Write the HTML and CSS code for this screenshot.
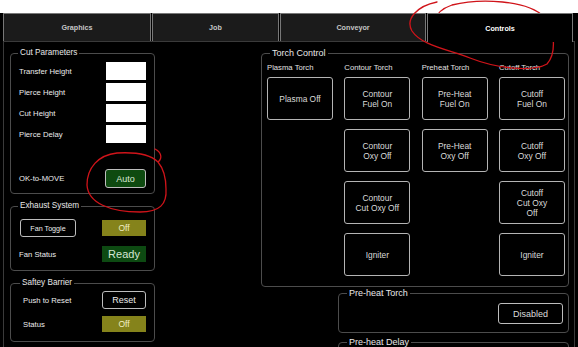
FILE: index.html
```html
<!DOCTYPE html>
<html lang="en">
<head>
  <meta charset="UTF-8" />
  <title>Controls</title>
  <link rel="stylesheet" href="styles.css">
</head>
<body>
  <div class="screen">
    <div class="top-strip"></div>

    <!-- tab bar -->
    <nav class="tabs">
      <div class="tab tab-graphics">Graphics</div>
      <div class="tab tab-job">Job</div>
      <div class="tab tab-conveyor">Conveyor</div>
      <div class="tab tab-controls active">Controls</div>
    </nav>

    <main class="content">
      <!-- left column -->
      <div class="left-col">
        <fieldset class="group cut">
          <legend>Cut Parameters</legend>
          <div class="param-list">
            <div class="row"><span>Transfer Height</span><input class="field" type="text"></div>
            <div class="row"><span>Pierce Height</span><input class="field" type="text"></div>
            <div class="row"><span>Cut Height</span><input class="field" type="text"></div>
            <div class="row"><span>Pierce Delay</span><input class="field" type="text"></div>
          </div>
          <div class="row ok-row"><span>OK-to-MOVE</span><button class="btn btn-auto">Auto</button></div>
        </fieldset>

        <fieldset class="group exhaust">
          <legend>Exhaust System</legend>
          <div class="row"><button class="btn btn-fan">Fan Toggle</button><div class="lamp lamp-off">Off</div></div>
          <div class="row gap-row"><span>Fan Status</span><div class="lamp lamp-ready">Ready</div></div>
        </fieldset>

        <fieldset class="group safety">
          <legend>Saftey Barrier</legend>
          <div class="row"><span>Push to Reset</span><button class="btn btn-reset">Reset</button></div>
          <div class="row status-row"><span>Status</span><div class="lamp lamp-off">Off</div></div>
        </fieldset>
      </div>

      <!-- right column -->
      <div class="right-col">
        <fieldset class="group torch">
          <legend>Torch Control</legend>
          <div class="torch-grid">
            <div class="torch-col">
              <div class="col-head">Plasma Torch</div>
              <div class="col-btns">
                <button class="tbtn">Plasma Off</button>
              </div>
            </div>
            <div class="torch-col">
              <div class="col-head">Contour Torch</div>
              <div class="col-btns">
                <button class="tbtn">Contour<br>Fuel On</button>
                <button class="tbtn">Contour<br>Oxy Off</button>
                <button class="tbtn">Contour<br>Cut Oxy Off</button>
                <button class="tbtn">Igniter</button>
              </div>
            </div>
            <div class="torch-col">
              <div class="col-head">Preheat Torch</div>
              <div class="col-btns">
                <button class="tbtn">Pre-Heat<br>Fuel On</button>
                <button class="tbtn">Pre-Heat<br>Oxy Off</button>
              </div>
            </div>
            <div class="torch-col">
              <div class="col-head">Cutoff Torch</div>
              <div class="col-btns">
                <button class="tbtn">Cutoff<br>Fuel On</button>
                <button class="tbtn">Cutoff<br>Oxy Off</button>
                <button class="tbtn">Cutoff<br>Cut Oxy<br>Off</button>
                <button class="tbtn">Igniter</button>
              </div>
            </div>
          </div>
        </fieldset>

        <fieldset class="group preheat">
          <legend>Pre-heat Torch</legend>
          <div class="preheat-body">
            <button class="btn btn-disabled">Disabled</button>
          </div>
        </fieldset>

        <fieldset class="group preheat delay">
          <legend>Pre-heat Delay</legend>
        </fieldset>
      </div>
    </main>

    <!-- red pen marks drawn over the screenshot -->
    <svg class="ink" width="578" height="347" viewBox="0 0 578 347">
      <path d="M440 41 C428 31 431 12 452 5 C480 -2 528 0 544 17 C556 31 556 54 547 64 C533 72 498 69 470 58 C446 49 421 45 412 31 C405 19 417 6 437 2" />
      <path d="M155 149 C161 152 163 158 158 162 C150 154 135 152 117 153 C98 155 87 168 87 185 C88 203 110 212 140 212 C160 212 167 204 166 189 C166 177 163 168 158 162" />
    </svg>
  </div>
</body>
</html>
```

FILE: styles.css
```css
* {
  box-sizing: border-box;
}
html {
  background: #000;
}
body {
  margin: 0;
  background: #000;
  font-family: "Liberation Sans", Arial, sans-serif;
  color: #e4e4e4;
}
.screen {
  position: relative;
  width: 578px;
  height: 347px;
  overflow: hidden;
  background: #000;
}
.top-strip {
  height: 13px;
  background: #fff;
}

/* tabs */
.tabs {
  display: flex;
  gap: 1px;
  padding-left: 3px;
  height: 28px;
}
.tab {
  height: 28px;
  border: 1px solid #787878;
  border-bottom: none;
  background: #1b1b1b;
  color: #c6c6c6;
  font-size: 7.2px;
  font-weight: bold;
  display: flex;
  align-items: center;
  justify-content: center;
}
.tab-graphics { width: 148px; }
.tab-job { width: 127px; }
.tab-conveyor { width: 146px; }
.tab-controls { width: 146px; }
.tab.active {
  background: #000;
  color: #fff;
  height: 29px;
  position: relative;
  z-index: 1;
}

/* content panel */
.content {
  margin-left: 3px;
  width: 572px;
  height: 320px;
  border: 1px solid #3a3a3a;
  padding: 6px 5px 0 6px;
  display: grid;
  grid-template-columns: 145px 308px;
  column-gap: 106px;
  align-items: start;
}
.group {
  margin: 0;
  min-width: 0;
  border: 1px solid #4c4c4c;
  border-radius: 4px;
  padding: 4px 8px 5px;
}
.group legend {
  font-size: 8.2px;
  line-height: 10px;
  padding: 0 2px;
  margin-left: -1px;
  color: #e8e8e8;
}
.row {
  display: flex;
  justify-content: space-between;
  align-items: center;
  height: 18px;
  font-size: 7.7px;
  color: #ececec;
}
.param-list {
  display: flex;
  flex-direction: column;
  gap: 3px;
}
.field {
  width: 40px;
  height: 18px;
  border: 0;
  padding: 0;
  background: #fff;
}
.ok-row {
  margin-top: 26px;
  height: 19px;
}
.btn {
  font-family: inherit;
  background: #000;
  color: #ececec;
  border: 1px solid #bdbdbd;
  border-radius: 3px;
  padding: 0;
}
.btn-auto {
  width: 41px;
  height: 19px;
  background: #0e4a10;
  color: #dbe9d6;
  font-size: 9px;
}
.exhaust {
  margin-top: 7px;
  padding: 8px 8px 7px;
}
.gap-row {
  margin-top: 8px;
}
.btn-fan {
  width: 56px;
  height: 18px;
  font-size: 7.2px;
  margin-left: 1px;
}
.lamp {
  width: 44px;
  height: 16px;
  display: flex;
  align-items: center;
  justify-content: center;
}
.lamp-off {
  background: #85831b;
  color: #f1eec4;
  font-size: 8.5px;
}
.lamp-ready {
  background: #0d4a12;
  color: #d5e6d3;
  font-size: 11px;
}
.safety {
  margin-top: 7px;
  padding: 3px 8px 8px 12px;
}
.safety legend {
  margin-left: -3px;
}
.status-row {
  margin-top: 6px;
}
.btn-reset {
  width: 44px;
  height: 18px;
  font-size: 9px;
}

/* torch control */
.torch {
  padding: 5px 3px 10px 5px;
}
.torch legend,
.preheat legend {
  font-size: 9px;
  margin-left: 3px;
}
.torch-grid {
  display: grid;
  grid-template-columns: repeat(4, 66px);
  column-gap: 11.33px;
}
.col-head {
  font-size: 7.7px;
  line-height: 10px;
  margin-bottom: 4px;
  white-space: nowrap;
  color: #e2e2e2;
}
.col-btns {
  display: flex;
  flex-direction: column;
  gap: 9px;
}
.tbtn {
  width: 66px;
  height: 43px;
  padding: 0;
  font-family: inherit;
  font-size: 8.4px;
  line-height: 10px;
  background: #000;
  color: #dadada;
  border: 1px solid #b4b4b4;
  border-radius: 3px;
}
.preheat {
  margin-left: 77px;
  margin-top: 1px;
  padding: 5px 5px 8px;
}
.preheat-body {
  display: flex;
  justify-content: flex-end;
}
.btn-disabled {
  width: 65px;
  height: 21px;
  font-size: 9px;
  color: #dcdcdc;
}
.delay {
  margin-top: 4px;
  height: 40px;
}

/* pen marks */
.ink {
  position: absolute;
  top: 0;
  left: 0;
  pointer-events: none;
}
.ink path {
  fill: none;
  stroke: #d0141a;
  stroke-width: 1.3;
  stroke-linecap: round;
}
```
